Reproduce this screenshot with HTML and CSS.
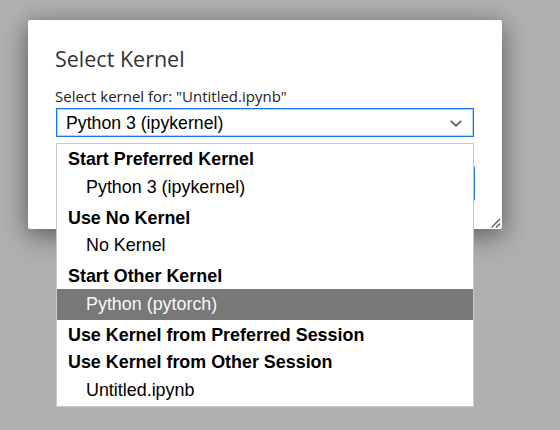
FILE: index.html
```html
<!DOCTYPE html>
<html lang="en">
<head>
<meta charset="utf-8">
<title>Select Kernel</title>
<link rel="stylesheet" href="styles.css">
</head>
<body>
<div class="dialog">
  <h1 class="title">Select Kernel</h1>
  <label class="label">Select kernel for: "Untitled.ipynb"</label>
  <div class="select-wrap">
    <div class="select">
      <span class="select-value">Python 3 (ipykernel)</span>
      <svg class="chevron" width="12" height="7" viewBox="0 0 12 7"><polyline points="0.8,0.8 6,5.8 11.2,0.8" fill="none" stroke="#555" stroke-width="1.6"/></svg>
    </div>
    <div class="listbox">
      <div class="group">Start Preferred Kernel</div>
      <div class="opt">Python 3 (ipykernel)</div>
      <div class="group">Use No Kernel</div>
      <div class="opt">No Kernel</div>
      <div class="group">Start Other Kernel</div>
      <div class="opt active">Python (pytorch)</div>
      <div class="group">Use Kernel from Preferred Session</div>
      <div class="group">Use Kernel from Other Session</div>
      <div class="opt">Untitled.ipynb</div>
    </div>
  </div>
  <div class="footer">
    <button class="btn cancel">Cancel</button>
    <button class="btn accept">Select</button>
  </div>
  <svg class="grip" width="12" height="12" viewBox="0 0 12 12"><line x1="1.5" y1="10.5" x2="10" y2="2" stroke="#555" stroke-width="1.2"/><line x1="6" y1="10.5" x2="10" y2="6.5" stroke="#555" stroke-width="1.2"/></svg>
</div>
</body>
</html>
```
FILE: styles.css
```css
* { box-sizing: border-box; }

html, body { height: 100%; }

body {
  margin: 0;
  padding: 20px 0 0 28px;
  background: #b0b0b0;
  overflow: hidden;
  font-family: "Open Sans", "Noto Sans", sans-serif;
}

.dialog {
  position: relative;
  width: 474px;
  height: 209px;
  padding: 25px 28px 28px 27px;
  display: flex;
  flex-direction: column;
  background: #fff;
  border-radius: 2px;
  box-shadow: 0 8px 28px rgba(0, 0, 0, 0.4), 0 0 18px rgba(0, 0, 0, 0.15);
}

.title {
  margin: 0;
  font-size: 21.5px;
  font-weight: 400;
  line-height: 28px;
  color: #333;
}

.label {
  display: block;
  margin-top: 13px;
  font-size: 15px;
  line-height: 20px;
  color: #222;
}

.select-wrap {
  position: relative;
  margin: 2px 0 0 1px;
}

.select {
  display: flex;
  justify-content: space-between;
  align-items: flex-start;
  height: 29px;
  padding: 4px 11px 0 9px;
  border: 1px solid #1a73e8;
  box-shadow: inset 0 0 0 1px #b3d3f7;
  font-family: "Liberation Sans", Arial, sans-serif;
  font-size: 17.7px;
  line-height: 20px;
  color: #000;
}

.chevron {
  align-self: center;
  margin-top: -2px;
}

.listbox {
  position: absolute;
  left: 0;
  top: calc(100% + 6px);
  width: 418px;
  background: #fff;
  border: 1px solid #c8c8c8;
  font-family: "Liberation Sans", Arial, sans-serif;
  font-size: 17.9px;
  line-height: 20px;
  color: #000;
  z-index: 2;
}

.group {
  height: 27.6px;
  padding: 5px 0 0 11px;
  font-weight: 700;
}

.opt {
  height: 31px;
  padding: 5px 0 0 29px;
}

.opt.active {
  background: #787878;
  color: #f7f7f7;
}

.footer {
  display: flex;
  justify-content: flex-end;
  gap: 8px;
  margin: 29px -1px 0 0;
}

.btn {
  height: 35px;
  width: 80px;
  border: none;
  border-radius: 2px;
  font-family: "Open Sans", sans-serif;
  font-size: 14px;
  color: #fff;
}

.cancel { background: #757575; }
.accept { background: #1976d2; }

.grip {
  position: absolute;
  right: 0;
  bottom: 0;
}
```
